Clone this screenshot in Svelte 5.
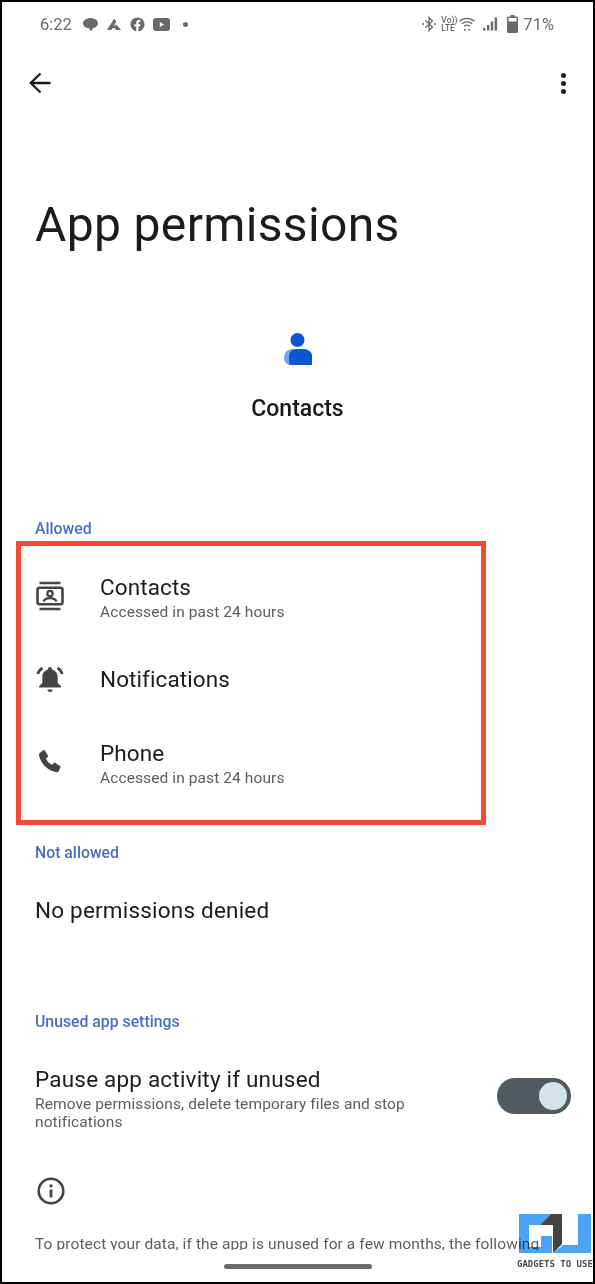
<script>
  const rows = [
    { title: 'Contacts', sub: 'Accessed in past 24 hours', icon: 'contacts' },
    { title: 'Notifications', sub: '', icon: 'bell' },
    { title: 'Phone', sub: 'Accessed in past 24 hours', icon: 'phone' }
  ];
</script>

<div class="frame">
  <header class="status">
    <div class="status-left">
      <span class="time">6:22</span>
      <svg width="15" height="15" viewBox="0 0 15 15"><path d="M7.500 1c4.200 0 7.500 2.300 7.500 5.200 0 2.300-2 4.200-4.700 4.900l-2.300 3.400-1.800-3.200c-3.500-.3-6.200-2.500-6.200-5.100 0-2.900 3.300-5.200 7.500-5.200z" fill="#6a6a6a"/></svg>
      <svg width="16" height="15" viewBox="0 0 16 16"><path d="M8.200 1.500l2.300 3.300-2.200 3.700 2.300 3.500h-4.300l-1.200 1.800h-4.600zM10.200 7.700l5.300 6.100h-5.200l-2-2.800z" fill="#6a6a6a"/></svg>
      <svg width="15" height="15" viewBox="0 0 15 15"><circle cx="7.500" cy="7.500" r="7" fill="#6a6a6a"/><path d="M6.300 15v-5.500h-1.800v-2.200h1.800v-1.700c0-1.800 1-2.700 2.600-2.700h1.500v2h-1c-.8 0-1 .4-1 1v1.400h2l-.3 2.200h-1.700v5.500z" fill="#fff"/></svg>
      <svg width="17" height="13" viewBox="0 0 17 13"><rect width="17" height="13" rx="3" fill="#6a6a6a"/><path d="M6.800 4l4.200 2.500-4.200 2.500z" fill="#fff"/></svg>
      <span class="dot"></span>
    </div>
    <div class="status-right">
      <svg width="14" height="16" viewBox="0 0 14 16" fill="none" stroke="#6a6a6a" stroke-width="1.300"><path d="M3.500 4.500l7 6.500-3.500 3.500v-13l3.500 3.500-7 6.500"/><path d="M0 8h2M12 8h2" stroke-width="1.600"/></svg>
      <span class="volte"><span>Vo))</span><span>LTE</span></span>
      <svg width="16" height="14" viewBox="0 0 16 14" fill="none" stroke="#6a6a6a" stroke-width="1.300"><path d="M.6 4.300c4.100-3.900 10.700-3.900 14.800 0M2.900 6.800c2.900-2.600 7.300-2.600 10.200 0M5.200 9.300c1.600-1.300 4-1.300 5.600 0"/><path d="M5 12.700h1.800M9.200 12.700h1.800" stroke-width="1.600"/></svg>
      <svg class="signal" width="14" height="14" viewBox="0 0 14 14"><path d="M0 11h2.400v2.500h-2.400zM4 8h2.400v5.500h-2.400zM7.800 4.500h2.400v9h-2.400zM11.600 .5h2.400v13h-2.400z" fill="#6a6a6a"/></svg>
      <svg class="battery" width="11" height="18" viewBox="0 0 11 18"><path d="M3.500 0h4v1.500h2a1.500 1.500 0 0 1 1.500 1.500v13.500a1.500 1.500 0 0 1-1.500 1.500h-8a1.500 1.500 0 0 1-1.500-1.500v-13.500a1.500 1.500 0 0 1 1.500-1.500h2z" fill="#6a6a6a"/><rect x="1.500" y="3" width="8" height="3.500" fill="#fff"/></svg>
      <span class="pct">71%</span>
    </div>
  </header>

  <nav class="toolbar">
    <svg width="24" height="24" viewBox="0 0 24 24" fill="none" stroke="#1c1c1c" stroke-width="2.300"><path d="M22.500 12h-20M12.500 2.500l-9.800 9.500 9.800 9.500"/></svg>
    <span class="more"><i></i><i></i><i></i></span>
  </nav>

  <h1>App permissions</h1>

  <section class="app">
    <div class="app-icon">
      <svg width="28" height="32" viewBox="0 0 28 32">
        <circle cx="13.500" cy="7" r="7" fill="#0b57d0"/>
        <path d="M0 25c0-6 4-9 9-9h6v16h-9c-3 0-6-3-6-7z" fill="#7ba3ea"/>
        <path d="M5 30v-7c0-4 3-7 8-7h7c4 0 8 3 8 7v9h-21c-1 0-2-1-2-2z" fill="#0b57d0"/>
      </svg>
    </div>
    <div class="app-name">Contacts</div>
  </section>

  <div class="label allowed">Allowed</div>
  <section class="list">
    {#each rows as row}
      <div class="row">
        <span class="row-icon {row.icon}">
          {#if row.icon === 'contacts'}
            <svg width="28" height="30" viewBox="0 0 28 30" fill="none" stroke="#444" stroke-width="2.600">
              <path d="M3.500 2h21M3.500 28h21"/>
              <rect x="1.500" y="6.800" width="25" height="16.400" rx="2"/>
              <circle cx="14" cy="12.500" r="2.700" stroke-width="2.200"/>
              <path d="M7.500 20.500c1-2.600 3.500-3.300 6.500-3.300s5.500.7 6.500 3.300" stroke-width="2.200"/>
            </svg>
          {:else if row.icon === 'bell'}
            <svg width="28" height="28" viewBox="0 0 28 28">
              <path d="M14 2a2 2 0 0 1 2 2v.6c3.500 1 5.700 4 5.700 7.400v6l3.300 3.200v1.300h-22v-1.300l3.300-3.200v-6c0-3.400 2.200-6.400 5.700-7.400v-.6a2 2 0 0 1 2-2z" fill="#444"/>
              <path d="M11.500 24.600h5a2.500 2.500 0 0 1-5 0z" fill="#444"/>
              <path d="M6.500 3c-2.300 1.300-4 3.300-4.800 6M21.500 3c2.300 1.300 4 3.300 4.800 6" fill="none" stroke="#444" stroke-width="2.600"/>
            </svg>
          {:else}
            <svg width="24" height="24" viewBox="0 0 24 24">
              <path d="M6.200 1.500l3.300 5.600-2.200 2.600c1.300 3 3.700 5.400 6.800 6.800l2.600-2.200 5.300 3.400-1.500 3.700c-.5 1-1.500 1.300-2.500 1.100-8.100-1.500-14.800-8.200-16.300-16.200-.2-1 .2-2 1.200-2.500z" fill="#444" stroke="#444" stroke-width="1.200" stroke-linejoin="round"/>
            </svg>
          {/if}
        </span>
        <div class="row-text">
          <div class="row-title">{row.title}</div>
          {#if row.sub}<div class="row-sub">{row.sub}</div>{/if}
        </div>
      </div>
    {/each}
  </section>

  <div class="label notallowed">Not allowed</div>
  <div class="none">No permissions denied</div>

  <div class="label unused">Unused app settings</div>
  <section class="pause">
    <div class="pause-text">
      <div class="pause-title">Pause app activity if unused</div>
      <div class="pause-sub">Remove permissions, delete temporary files and stop notifications</div>
    </div>
    <span class="switch"><span class="knob"></span></span>
  </section>

  <svg class="info" width="30" height="30" viewBox="0 0 30 30" fill="none" stroke="#444" stroke-width="2.600">
    <circle cx="15" cy="15" r="12.300"/>
    <path d="M15 13.500v8" stroke-width="2.800"/>
    <path d="M15 8.500v2.800" stroke-width="2.800"/>
  </svg>
  <div class="foot">To protect your data, if the app is unused for a few months, the following</div>

  <div class="handle"></div>

  <div class="wm">
    <svg width="72" height="39" viewBox="0 0 72 39">
      <path d="M0 0H32L21 11H10V33H22V22H33V39H0Z" fill="#4aa3f5"/>
      <path d="M32 0H43V30L34 39V11H21Z" fill="#444"/>
      <path d="M59 0H72V39H34L44 31H59Z" fill="#4aa3f5"/>
    </svg>
    <span class="wm-text">GADGETS TO USE</span>
  </div>
</div>

<style>
  :global(body) {
    margin: 0;
    background: #fff;
  }
  .frame {
    position: relative;
    box-sizing: border-box;
    width: 595px;
    height: 1284px;
    border: 2px solid #000;
    background: #fff;
    overflow: hidden;
    font-family: Roboto, "Liberation Sans", sans-serif;
    color: #1c1c1c;
  }
  .status {
    display: flex;
    justify-content: space-between;
    align-items: center;
    height: 20px;
    margin-top: 12px;
    padding: 0 39px 0 38px;
    color: #6a6a6a;
  }
  .status-left,
  .status-right {
    display: flex;
    align-items: center;
  }
  .status-left { gap: 8px; }
  .status-right { gap: 4px; }
  .time { font-size: 16.500px; margin-right: 3px; }
  .dot {
    width: 5px;
    height: 5px;
    margin-left: 5px;
    border-radius: 50%;
    background: #6a6a6a;
  }
  .volte {
    display: flex;
    flex-direction: column;
    width: 14px;
    margin-left: 1px;
    font-size: 8.500px;
    line-height: 8px;
    font-weight: 500;
    white-space: nowrap;
  }
  .signal { margin-left: 4px; }
  .battery { margin-left: 6px; }
  .pct { font-size: 16.500px; margin-left: 1px; }
  .toolbar {
    display: flex;
    justify-content: space-between;
    align-items: center;
    height: 24px;
    margin-top: 37px;
    padding: 0 27px 0 26px;
  }
  .more {
    display: flex;
    flex-direction: column;
    gap: 3px;
  }
  .more i {
    width: 5px;
    height: 5px;
    border-radius: 50%;
    background: #1c1c1c;
  }
  h1 {
    margin: 102px 0 0 33px;
    font-size: 48px;
    line-height: 56px;
    font-weight: 400;
    letter-spacing: 0.35px;
  }
  .app {
    display: flex;
    flex-direction: column;
    align-items: center;
    margin-top: 68px;
  }
  .app-icon {
    display: flex;
    justify-content: center;
    align-items: center;
    width: 56px;
    height: 56px;
    box-shadow: 0 0 4px rgba(0, 0, 0, 0.015);
  }
  .app-name {
    margin-top: 18px;
    font-size: 23px;
    line-height: 28px;
    font-weight: 500;
    color: #1a1a1a;
  }
  .label {
    margin-left: 33px;
    font-size: 15.800px;
    line-height: 20px;
    font-weight: 500;
    color: #4a6ec4;
  }
  .allowed { margin-top: 96px; }
  .list {
    box-sizing: border-box;
    width: 470px;
    height: 284px;
    margin: 2px 0 0 14px;
    padding-top: 10px;
    border: 5px solid #f44a35;
  }
  .row {
    display: flex;
    align-items: center;
    height: 84px;
    padding-left: 15px;
  }
  .row:nth-child(2) { height: 78px; }
  .row:nth-child(3) { height: 92px; }
  .row-icon {
    display: flex;
    justify-content: center;
    width: 28px;
    margin-right: 36px;
  }
  .row-icon.contacts { margin-bottom: 5px; }
  .row-icon.phone { margin-bottom: 6px; }
  .row-title {
    font-size: 22.500px;
    line-height: 28px;
    color: #1c1c1c;
    letter-spacing: 0.1px;
  }
  .row-sub {
    font-size: 15.500px;
    line-height: 23px;
    color: #5d5d5d;
    letter-spacing: 0.1px;
  }
  .notallowed { margin-top: 18px; }
  .none {
    margin: 33px 0 0 33px;
    font-size: 22.500px;
    line-height: 28px;
    letter-spacing: 0.2px;
  }
  .unused { margin-top: 88px; }
  .pause {
    display: flex;
    justify-content: space-between;
    align-items: flex-start;
    margin-top: 33px;
    padding: 0 22px 0 33px;
  }
  .pause-text { width: 400px; }
  .pause-title {
    font-size: 22.500px;
    line-height: 28px;
    letter-spacing: 0.2px;
  }
  .pause-sub {
    margin-top: 2px;
    font-size: 15.500px;
    line-height: 18px;
    color: #5d5d5d;
    letter-spacing: 0.1px;
  }
  .switch {
    display: flex;
    justify-content: flex-end;
    align-items: center;
    box-sizing: border-box;
    width: 74px;
    height: 36px;
    margin-top: 13px;
    padding-right: 4px;
    border-radius: 18px;
    background: #4f5b60;
  }
  .knob {
    width: 28px;
    height: 28px;
    border-radius: 50%;
    background: #d4e3ea;
  }
  .info {
    display: block;
    margin: 45px 0 0 34px;
  }
  .foot {
    margin: 27px 0 0 33px;
    height: 17px;
    overflow: hidden;
    font-size: 15.500px;
    line-height: 22px;
    color: #5d5d5d;
    white-space: nowrap;
    letter-spacing: 0.1px;
  }
  .handle {
    position: absolute;
    left: 222px;
    bottom: 13px;
    width: 148px;
    height: 5px;
    border-radius: 3px;
    background: #6a6a6a;
  }
  .wm {
    position: absolute;
    left: 515px;
    bottom: 13px;
    display: flex;
    flex-direction: column;
    width: 78px;
    mix-blend-mode: multiply;
  }
  .wm svg { margin-left: 2px; }
  .wm-text {
    margin-top: 6px;
    font-family: "DejaVu Sans Mono", monospace;
    font-weight: 700;
    font-size: 9px;
    line-height: 10px;
    color: #4a4a4a;
    white-space: nowrap;
  }
</style>
